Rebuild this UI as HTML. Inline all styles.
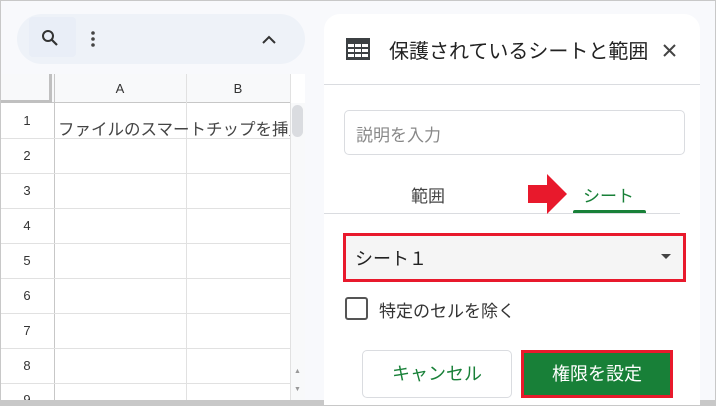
<!DOCTYPE html>
<html><head><meta charset="utf-8"><style>
*{box-sizing:border-box;margin:0;padding:0}
body{width:716px;height:406px;overflow:hidden;background:#f8f9fc;font-family:"Liberation Sans","Noto Sans CJK JP",sans-serif;position:relative}
.a{position:absolute}
.pill{left:17px;top:14px;width:288px;height:50px;border-radius:25px;background:#eef2f8}
.grid{left:0;top:74px;width:305px;height:326px;background:#fff;overflow:hidden}
.hdr{left:0;top:0;width:290px;height:29px;background:#f8f9fa;border-bottom:1px solid #c7c7c7}
.cell{position:absolute;font-size:13px;color:#333;text-align:center}
.hl{position:absolute;left:0;width:290px;height:1px;background:#e1e1e1}
.vl{position:absolute;top:0;width:1px;height:326px;background:#e1e1e1}
.panel{left:324px;top:14px;width:376px;height:392px;background:#fff;border-radius:16px 16px 0 0}
</style></head><body>
<div class="a pill"></div>
<div class="a" style="left:29px;top:17px;width:47px;height:40px;background:#e9eef7;border-radius:4px"></div>
<svg class="a" style="left:40px;top:28px" width="20" height="20" viewBox="0 0 20 20"><circle cx="8" cy="8" r="5" fill="none" stroke="#333" stroke-width="2"/><path d="M12 12l5 5" stroke="#333" stroke-width="2.2"/></svg>
<svg class="a" style="left:90px;top:31px" width="6" height="16"><circle cx="3" cy="2" r="1.8" fill="#444"/><circle cx="3" cy="8" r="1.8" fill="#444"/><circle cx="3" cy="14" r="1.8" fill="#444"/></svg>
<svg class="a" style="left:262px;top:35px" width="14" height="9"><path d="M1 8l6-6 6 6" fill="none" stroke="#333" stroke-width="2"/></svg>
<div class="a grid">
<div class="a hdr"></div>
<div class="a" style="left:0;top:0;width:52px;height:29px;background:#f8f9fa;border-right:3px solid #c0c0c0;border-bottom:3px solid #c0c0c0"></div>
<div class="vl" style="left:54px;background:#c7c7c7"></div>
<div class="vl" style="left:186px;top:0"></div>
<div class="vl" style="left:290px"></div>
<div class="cell" style="left:54px;top:7px;width:132px">A</div>
<div class="cell" style="left:186px;top:7px;width:104px">B</div>
<div class="hl" style="top:64px"></div><div class="hl" style="top:99px"></div><div class="hl" style="top:134px"></div><div class="hl" style="top:169px"></div><div class="hl" style="top:204px"></div><div class="hl" style="top:239px"></div><div class="hl" style="top:274px"></div><div class="hl" style="top:309px"></div>
<div class="cell" style="left:0;top:39px;width:54px">1</div>
<div class="cell" style="left:0;top:74px;width:54px">2</div>
<div class="cell" style="left:0;top:109px;width:54px">3</div>
<div class="cell" style="left:0;top:144px;width:54px">4</div>
<div class="cell" style="left:0;top:179px;width:54px">5</div>
<div class="cell" style="left:0;top:214px;width:54px">6</div>
<div class="cell" style="left:0;top:249px;width:54px">7</div>
<div class="cell" style="left:0;top:284px;width:54px">8</div>
<div class="cell" style="left:0;top:318px;width:54px">9</div>
<div class="a" style="left:58px;top:42px;font-size:16.5px;color:#444;white-space:nowrap;width:232px;overflow:hidden">ファイルのスマートチップを挿入</div>
<div class="a" style="left:291px;top:29px;width:14px;height:297px;background:#f8f9fa"></div>
<div class="a" style="left:292px;top:31px;width:11px;height:32px;background:#dadce0;border-radius:6px"></div>
<div class="a" style="left:294px;top:294px;font-size:7px;color:#999">▲</div>
<div class="a" style="left:294px;top:312px;font-size:7px;color:#999">▼</div>
</div>
<div class="a" style="left:0;top:400px;width:716px;height:6px;background:#c8c8c8"></div>
<div class="a panel"></div>
<svg class="a" style="left:346px;top:38px" width="24" height="22"><rect x="0" y="0" width="24" height="22" fill="#3c4043"/><g fill="#fff"><rect x="2" y="6" width="6" height="3"/><rect x="9" y="6" width="6" height="3"/><rect x="16" y="6" width="6" height="3"/><rect x="2" y="11" width="6" height="3"/><rect x="9" y="11" width="6" height="3"/><rect x="16" y="11" width="6" height="3"/><rect x="2" y="16" width="6" height="3"/><rect x="9" y="16" width="6" height="3"/><rect x="16" y="16" width="6" height="3"/></g></svg>
<div class="a" style="left:389px;top:35px;font-size:20px;color:#222;white-space:nowrap">保護されているシートと範囲</div>
<svg class="a" style="left:663px;top:44px" width="13" height="13"><path d="M1 1l11 11M12 1L1 12" stroke="#444" stroke-width="2"/></svg>
<div class="a" style="left:324px;top:84px;width:376px;height:1px;background:#dadce0"></div>
<div class="a" style="left:344px;top:110px;width:341px;height:45px;border:1px solid #dadce0;border-radius:5px"></div>
<div class="a" style="left:356px;top:121px;font-size:17px;color:#888">説明を入力</div>
<div class="a" style="left:411px;top:182px;font-size:17px;color:#444">範囲</div>
<div class="a" style="left:583px;top:182px;font-size:17px;color:#188038">シート</div>
<div class="a" style="left:573px;top:210px;width:73px;height:3px;background:#188038;border-radius:2px 2px 0 0"></div>
<div class="a" style="left:324px;top:213px;width:356px;height:1px;background:#dadce0"></div>
<svg class="a" style="left:528px;top:174px" width="39" height="40"><path d="M0 11h19V0l20 20-20 20V29H0z" fill="#e8192c"/></svg>
<div class="a" style="left:343px;top:233px;width:343px;height:49px;background:#f5f5f5;border:3px solid #e8192c"></div>
<div class="a" style="left:355px;top:245px;font-size:18px;color:#222">シート１</div>
<div class="a" style="left:661px;top:254px;width:0;height:0;border-left:5px solid transparent;border-right:5px solid transparent;border-top:5px solid #444"></div>
<div class="a" style="left:345px;top:297px;width:23px;height:23px;border:2px solid #555;border-radius:3px"></div>
<div class="a" style="left:379px;top:297px;font-size:17px;color:#333">特定のセルを除く</div>
<div class="a" style="left:362px;top:350px;width:150px;height:48px;border:1px solid #dadce0;border-radius:5px;text-align:center;line-height:46px;font-size:18px;color:#188038">キャンセル</div>
<div class="a" style="left:521px;top:350px;width:152px;height:48px;background:#188038;border:3px solid #e8192c;text-align:center;line-height:42px;font-size:18px;color:#fff">権限を設定</div>
<div class="a" style="left:0;top:0;width:716px;height:406px;border:1px solid #c8c8c8;pointer-events:none"></div>
</body></html>
